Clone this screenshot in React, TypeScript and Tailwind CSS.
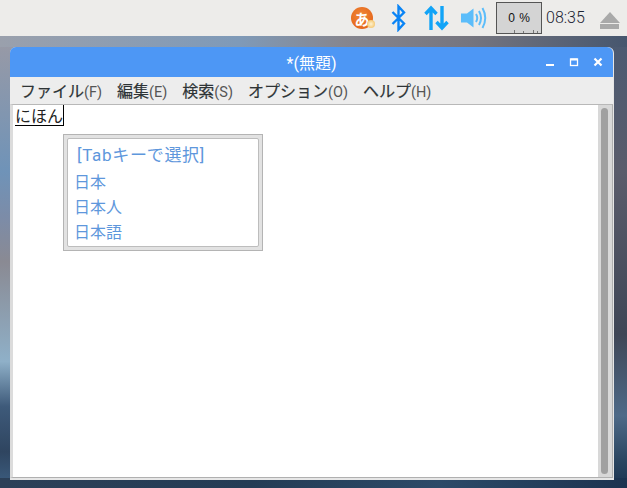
const uiFont = "[font-family:'Roboto','Noto_Sans_CJK_JP',sans-serif]";

const menus = [
  { label: 'ファイル', key: '(F)' },
  { label: '編集', key: '(E)' },
  { label: '検索', key: '(S)' },
  { label: 'オプション', key: '(O)' },
  { label: 'ヘルプ', key: '(H)' },
];

const candidates = ['日本', '日本人', '日本語'];

const TopBar = () => (
  <div className="flex h-[36px] shrink-0 items-center bg-[#edecea] pl-[351px]">
    <div className="relative flex h-[22px] w-[22px] items-center justify-center rounded-full bg-[radial-gradient(circle_at_45%_40%,#f08a3a,#e25a10)]">
      <span className="text-[15px] leading-none font-bold text-white [font-family:'Noto_Sans_CJK_JP',sans-serif]">あ</span>
      <span className="absolute right-[-2px] bottom-[1px] h-[8px] w-[8px] rounded-full bg-[radial-gradient(circle,#fff2d0,#f0b850)]" />
    </div>
    <svg className="ml-[18px]" width="15" height="28" viewBox="0 0 15 28" fill="none" stroke="#0a84f5" strokeWidth="2.4">
      <path d="M1.5 8 L13 19.5 L7.5 25.5 V2.5 L13 8.5 L1.5 20" />
    </svg>
    <svg className="ml-[18px]" width="25" height="26" viewBox="0 0 25 26" fill="none" stroke="#12a4f7" strokeWidth="3.4">
      <path d="M7 25 V3 M1.5 9 L7 3 L12.5 9" />
      <path d="M18 1 V23 M12.5 17 L18 23 L23.5 17" />
    </svg>
    <svg className="ml-[12px]" width="27" height="24" viewBox="0 0 27 24" fill="none" stroke="#5cbdfa" strokeWidth="2">
      <path d="M0 7.5 H6 L12.5 2.5 V21.5 L6 16.5 H0 Z" fill="#5cbdfa" stroke="none" />
      <path d="M15 8 Q17.5 12 15 16" />
      <path d="M18 5 Q22 12 18 19" />
      <path d="M21.5 2 Q27 12 21.5 22" />
    </svg>
    <div className="relative ml-[8px] flex h-[32px] w-[46px] items-center justify-center border border-[#555] bg-[#d4d4d4] text-[12px] text-[#111] [word-spacing:1px] [font-family:'Liberation_Sans',sans-serif]">
      0 %
      <svg className="absolute bottom-0 left-0" width="44" height="4" viewBox="0 0 44 4" stroke="#777" strokeWidth="1">
        <path d="M17.5 4 V1 M26.5 4 V2 M36.5 4 V1 M40.5 4 V2" />
      </svg>
    </div>
    <span className="ml-[4px] text-[16px] font-light text-[#1c2433] [font-family:'Roboto',sans-serif]">08:35</span>
    <div className="ml-[15px] flex flex-col items-center gap-[1px] pt-[5px]">
      <div className="h-0 w-0 border-x-[10px] border-b-[11px] border-x-transparent border-b-[#a9a9a9]" />
      <div className="h-[5px] w-[19px] bg-[#a9a9a9]" />
    </div>
  </div>
);

const TitleBar = () => (
  <div className="relative flex h-[30px] shrink-0 items-center justify-center rounded-t-[6px] bg-[#4d97f5] pt-[3px] text-[16px] text-white">
    <span className={uiFont}>*(無題)</span>
    <div className="absolute top-0 right-[10px] flex h-full items-center gap-[14px]">
      <svg width="10" height="10" viewBox="0 0 10 10" fill="#fff">
        <rect x="1" y="7" width="8" height="2" />
      </svg>
      <svg width="10" height="10" viewBox="0 0 10 10" fill="none" stroke="#fff" strokeWidth="1.3">
        <rect x="1.5" y="2" width="7" height="6.5" />
        <path d="M1.5 2.5 H8.5" strokeWidth="2" />
      </svg>
      <svg width="10" height="10" viewBox="0 0 10 10" fill="none" stroke="#fff" strokeWidth="2.2">
        <path d="M1.5 1.5 L8.5 8.5 M8.5 1.5 L1.5 8.5" />
      </svg>
    </div>
  </div>
);

const MenuBar = () => (
  <div className={`flex h-[27px] shrink-0 items-center gap-[15px] bg-[#ededed] pt-[2px] pl-[10px] text-[16px] text-[#2e3436] ${uiFont}`}>
    {menus.map(({ label, key }) => (
      <span key={label} className="[-webkit-text-stroke:0.2px_#2e3436]">
        {label}
        <span className="text-[14.5px] text-[#555] [-webkit-text-stroke:0]">{key}</span>
      </span>
    ))}
  </div>
);

const Popup = () => (
  <div className="absolute top-[29px] left-[50px] w-[200px] border border-[#b4b4b4] bg-[#e2e2e2] p-[3px]">
    <div className={`h-[109px] rounded-[2px] border border-[#bdbdbd] bg-white pl-[6px] text-[16px] text-[#5e97dc] ${uiFont}`}>
      <div className="ml-[3px] h-[31px] text-[17px] leading-[33px] tracking-[0.7px]">[Tabキーで選択]</div>
      {candidates.map((word) => (
        <div key={word} className="h-[25px] leading-[26px]">
          {word}
        </div>
      ))}
    </div>
  </div>
);

const Editor = () => (
  <div className="flex min-h-0 flex-1 border-t border-r border-b border-l-[3px] border-t-[#b8b8b8] border-r-[#b0b0b0] border-b-[#b0b0b0] border-l-[#dcdcdc] bg-white">
    <div className="relative flex-1">
      <div className={`ml-[2px] flex h-[21px] w-[49px] items-start justify-end border-r border-b border-black pt-[1px] text-[16px] leading-[21px] whitespace-nowrap text-[#222] ${uiFont}`}>
        にほん
      </div>
      <Popup />
    </div>
    <div className="flex w-[14px] bg-[#d8d8d8] pt-[3px] pb-[3px] pl-[3px]">
      <div className="w-[7px] rounded-full bg-[#a0a0a0]" />
    </div>
  </div>
);

export default function App() {
  return (
    <div className="flex h-[488px] w-[627px] flex-col overflow-hidden">
      <TopBar />
      <div className="flex flex-1 flex-col pt-[11px] pr-[13px] pb-[8px] pl-[10px] [background:linear-gradient(90deg,#9aa0ac_0%,#7f9ab8_38%,#86868f_55%,#75757f_75%,#46566e_100%)_0_0/100%_11px_no-repeat,linear-gradient(90deg,#2c4058_0%,#243c55_40%,#2c4a68_70%,#1c3350_100%)_0_100%/100%_10px_no-repeat,linear-gradient(180deg,#9a9aa5_0%,#6f93b8_30%,#7c8ca8_40%,#8a8a93_50%,#8fb0c8_72%,#3e5a7a_82%,#2f4560_92%,#3d5f82_100%)_0_0/50%_100%_no-repeat,linear-gradient(180deg,#4b5a72_0%,#5a5c6b_30%,#3f4656_66%,#4e6a88_84%,#2a4560_94%,#1c3350_100%)_100%_0/50%_100%_no-repeat]">
        <div className="flex flex-1 flex-col rounded-t-[6px] bg-[#e6e6e6] pr-[1px] pb-[2px]">
          <TitleBar />
          <MenuBar />
          <Editor />
        </div>
      </div>
    </div>
  );
}
